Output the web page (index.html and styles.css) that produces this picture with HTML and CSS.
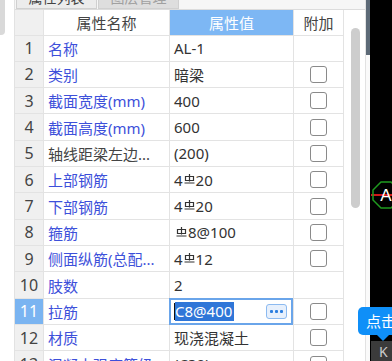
FILE: index.html
```html
<!DOCTYPE html>
<html lang="zh-CN">
<head>
    <meta charset="UTF-8">
    <title>属性列表</title>
    <link rel="stylesheet" href="styles.css">
</head>
<body>
    <div class="rail"><div class="grip"></div></div>

    <div class="panel">
        <div class="tabs">
            <div class="tab active">属性列表</div>
            <div class="tab">图层管理</div>
        </div>

        <div class="panel-body">
            <div class="grid">
                <div class="cell num head"></div>
                <div class="cell head">属性名称</div>
                <div class="cell head value-head">属性值</div>
                <div class="cell head">附加</div>

                <div class="cell num">1</div>
                <div class="cell name">名称</div>
                <div class="cell value">AL-1</div>
                <div class="cell check"></div>

                <div class="cell num">2</div>
                <div class="cell name">类别</div>
                <div class="cell value">暗梁</div>
                <div class="cell check"><span class="box"></span></div>

                <div class="cell num">3</div>
                <div class="cell name">截面宽度(mm)</div>
                <div class="cell value">400</div>
                <div class="cell check"><span class="box"></span></div>

                <div class="cell num">4</div>
                <div class="cell name">截面高度(mm)</div>
                <div class="cell value">600</div>
                <div class="cell check"><span class="box"></span></div>

                <div class="cell num">5</div>
                <div class="cell name plain">轴线距梁左边...</div>
                <div class="cell value">(200)</div>
                <div class="cell check"><span class="box"></span></div>

                <div class="cell num">6</div>
                <div class="cell name">上部钢筋</div>
                <div class="cell value">4<svg class="gang" viewBox="0 0 11 10"><path d="M5.5 0v7.5M1.5 2.5h8v4h-8zM0.5 9h10"/></svg>20</div>
                <div class="cell check"><span class="box"></span></div>

                <div class="cell num">7</div>
                <div class="cell name">下部钢筋</div>
                <div class="cell value">4<svg class="gang" viewBox="0 0 11 10"><path d="M5.5 0v7.5M1.5 2.5h8v4h-8zM0.5 9h10"/></svg>20</div>
                <div class="cell check"><span class="box"></span></div>

                <div class="cell num">8</div>
                <div class="cell name">箍筋</div>
                <div class="cell value"><svg class="gang lead" viewBox="0 0 11 10"><path d="M5.5 0v7.5M1.5 2.5h8v4h-8zM0.5 9h10"/></svg>8@100</div>
                <div class="cell check"><span class="box"></span></div>

                <div class="cell num">9</div>
                <div class="cell name">侧面纵筋(总配...</div>
                <div class="cell value">4<svg class="gang" viewBox="0 0 11 10"><path d="M5.5 0v7.5M1.5 2.5h8v4h-8zM0.5 9h10"/></svg>12</div>
                <div class="cell check"><span class="box"></span></div>

                <div class="cell num">10</div>
                <div class="cell name">肢数</div>
                <div class="cell value">2</div>
                <div class="cell check"></div>

                <div class="cell num current">11</div>
                <div class="cell name">拉筋</div>
                <div class="cell value editing">
                    <div class="editor">
                        <span class="caret"></span><span class="selected">C8@400</span>
                        <span class="more"><i></i><i></i><i></i></span>
                    </div>
                </div>
                <div class="cell check"><span class="box"></span></div>

                <div class="cell num">12</div>
                <div class="cell name">材质</div>
                <div class="cell value">现浇混凝土</div>
                <div class="cell check"><span class="box"></span></div>

                <div class="cell num">13</div>
                <div class="cell name">混凝土强度等级</div>
                <div class="cell value">(C30)</div>
                <div class="cell check"><span class="box"></span></div>
            </div>

            <div class="scroll"><div class="thumb"></div></div>
        </div>
    </div>

    <div class="split"><div class="split-top"></div></div>

    <div class="canvas">
        <svg class="axis" width="30" height="30" viewBox="0 0 30 30">
            <line x1="0" y1="15" x2="30" y2="15" stroke="#d01818" stroke-width="2"/>
            <polygon points="10,2 20,2 28,10 28,20 20,28 10,28 2,20 2,10" fill="none" stroke="#1f9a1f" stroke-width="1.5"/>
            <text x="15" y="21" text-anchor="middle" fill="#fff" font-size="17" font-family="Liberation Sans, sans-serif">A</text>
        </svg>
        <div class="dock">K</div>
    </div>

    <div class="tip">点击编辑</div>
</body>
</html>
```

FILE: styles.css
```css
* {
    margin: 0;
    padding: 0;
    box-sizing: border-box;
}

body {
    width: 392px;
    height: 361px;
    overflow: hidden;
    display: flex;
    position: relative;
    background: #fff;
    font-family: 'Noto Sans', 'Noto Sans CJK SC', sans-serif;
    font-size: 15px;
    color: #333;
}

.rail {
    width: 14px;
    flex: none;
}

.grip {
    width: 5px;
    height: 35px;
    background: #d9d9d9;
    border-bottom-right-radius: 4px;
}

.panel {
    width: 351px;
    flex: none;
    border-left: 1px solid #e2e2e2;
    display: flex;
    flex-direction: column;
}

.tabs {
    height: 10px;
    display: flex;
    padding-left: 1px;
    background: #f6f6f6;
    border-bottom: 1px solid #dcdcdc;
    overflow: hidden;
}

.tab {
    width: 81px;
    height: 24px;
    margin-top: -15px;
    margin-right: 1px;
    line-height: 24px;
    text-align: center;
    font-size: 14px;
    background: #dedede;
    color: #a0a0a0;
    border: 1px solid #d0d0d0;
}

.tab.active {
    background: #ececec;
    color: #444;
}

.panel-body {
    flex: 1;
    display: flex;
    overflow: hidden;
}

.grid {
    width: 329px;
    flex: none;
    display: grid;
    grid-template-columns: 29px 126px 124px 50px;
    grid-template-rows: 25.5px;
    grid-auto-rows: 26.33px;
}

.cell {
    border-right: 1px solid #e3e3e3;
    border-bottom: 1px solid #e3e3e3;
    display: flex;
    align-items: center;
    white-space: nowrap;
    overflow: hidden;
}

.head {
    justify-content: center;
    color: #444;
}

.value-head {
    background: #7db7f4;
    color: #fff;
}

.num {
    justify-content: center;
    background: #f0f0f0;
    color: #444;
    font-size: 16px;
}

.num.current {
    background: #7ab4f1;
    color: #fff;
}

.name {
    padding-left: 4px;
    color: #3d50da;
}

.name.plain {
    color: #444;
}

.value {
    padding-left: 4px;
}

.gang {
    width: 11px;
    height: 10px;
    margin: 0 1px;
    align-self: flex-start;
    margin-top: 7px;
    fill: none;
    stroke: #333;
    stroke-width: 1.2;
}

.gang.lead {
    margin-left: 2px;
}

.check {
    justify-content: center;
}

.box {
    width: 17px;
    height: 17px;
    border: 1px solid #8a8a8a;
    border-radius: 3px;
    background: #fff;
}

.value.editing {
    padding: 0;
    overflow: visible;
}

.editor {
    width: 124px;
    height: 27px;
    margin-left: -1px;
    margin-top: 1px;
    border: 2px solid #6aa5ea;
    display: flex;
    align-items: center;
    padding-left: 3px;
}

.caret {
    width: 1px;
    height: 17px;
    background: #111;
}

.selected {
    background: #2f76d8;
    color: #fff;
    line-height: 19px;
    padding-right: 2px;
}

.more {
    margin-left: auto;
    margin-right: 4px;
    width: 21px;
    height: 15px;
    border: 1px solid #8cbaf0;
    border-radius: 3px;
    background: #e7f0fc;
    display: flex;
    align-items: center;
    justify-content: center;
    gap: 2px;
}

.more i {
    width: 3px;
    height: 3px;
    background: #2d7fdf;
    border-radius: 1px;
}

.scroll {
    flex: 1;
    padding: 18px 0 0 7px;
}

.thumb {
    width: 9px;
    height: 180px;
    border-radius: 5px;
    background: #cdcdcd;
}

.split {
    width: 5px;
    flex: none;
    border-left: 1px solid #e2e2e2;
    background: #fafafa;
}

.split-top {
    height: 55px;
    background: #5d6a77;
}

.canvas {
    flex: 1;
    background: #000;
    position: relative;
}

.axis {
    position: absolute;
    left: 1px;
    top: 180px;
}

.dock {
    position: absolute;
    left: 1px;
    right: 0;
    top: 341px;
    height: 20px;
    background: #3b3b3b;
    color: #ccc;
    font-size: 14px;
    padding-left: 8px;
    line-height: 22px;
}

.tip {
    position: absolute;
    left: 358px;
    top: 307px;
    width: 80px;
    height: 28px;
    padding-left: 8px;
    line-height: 28px;
    border-radius: 5px;
    background: #0f8ff8;
    color: #fff;
    font-size: 15px;
    white-space: nowrap;
}

.tip::after {
    content: "";
    position: absolute;
    left: 19px;
    top: 28px;
    border: 6px solid transparent;
    border-top-color: #0f8ff8;
}
```
